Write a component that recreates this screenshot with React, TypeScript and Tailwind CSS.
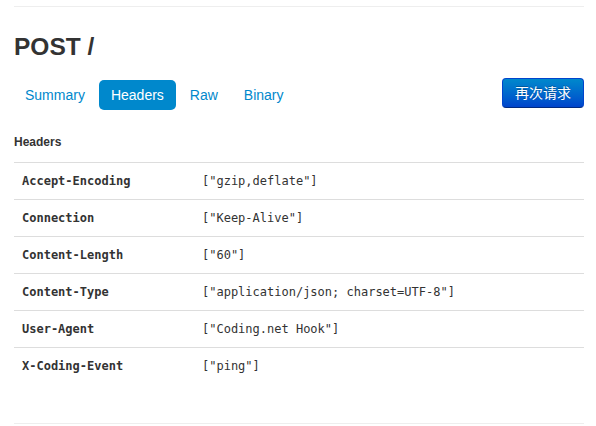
import React from "react";

const rows: [string, string][] = [
  ["Accept-Encoding", '["gzip,deflate"]'],
  ["Connection", '["Keep-Alive"]'],
  ["Content-Length", '["60"]'],
  ["Content-Type", '["application/json; charset=UTF-8"]'],
  ["User-Agent", '["Coding.net Hook"]'],
  ["X-Coding-Event", '["ping"]'],
];

const tabs = ["Summary", "Headers", "Raw", "Binary"];

export default function App() {
  return (
    <div
      className="w-[596px] h-[426px] bg-white pl-[14px] pr-[12px] pt-[6px] text-[#333]"
      style={{ fontFamily: '"Liberation Sans", Arial, sans-serif' }}
    >
      <div className="border-t border-[#eeeeee]" />
      <h3 className="mt-[20px] h-[40px] text-[24.5px] leading-[40px] font-bold text-[#333]">
        POST /
      </h3>
      <div className="mt-[11px] flex items-start justify-between">
        <ul className="-ml-[1px] mt-[2px] flex gap-[2px]">
          {tabs.map((t) => (
            <li key={t}>
              <span
                className={
                  t === "Headers"
                    ? "block rounded-[5px] bg-[#0088cc] px-[12px] py-[8px] text-[14px] leading-[14px] text-white"
                    : "block rounded-[5px] px-[12px] py-[8px] text-[14px] leading-[14px] text-[#0088cc]"
                }
              >
                {t}
              </span>
            </li>
          ))}
        </ul>
        <button
          className="h-[30px] rounded-[4px] border border-[#0044cc] border-b-[#002a80] bg-gradient-to-b from-[#0088cc] to-[#0044cc] px-[12px] text-[14px] leading-[20px] text-white [text-shadow:0_-1px_0_rgba(0,0,0,0.25)]"
          style={{
            fontFamily:
              '"Liberation Sans", "Noto Sans CJK SC", Arial, sans-serif',
          }}
        >
          再次请求
        </button>
      </div>
      <div className="mt-[22px] text-[12px] font-bold leading-[20px]">Headers</div>
      <table
        className="mt-[10px] w-full border-collapse text-[12px] leading-[20px]"
        style={{ fontFamily: '"DejaVu Sans Mono", "Liberation Mono", monospace' }}
      >
        <tbody>
          {rows.map(([k, v]) => (
            <tr key={k}>
              <td className="w-[180px] border-t border-[#dddddd] p-[8px] text-left font-bold">
                {k}
              </td>
              <td className="border-t border-[#dddddd] p-[8px] text-left">{v}</td>
            </tr>
          ))}
        </tbody>
      </table>
      <div className="mt-[39px] border-t border-[#eeeeee]" />
    </div>
  );
}
